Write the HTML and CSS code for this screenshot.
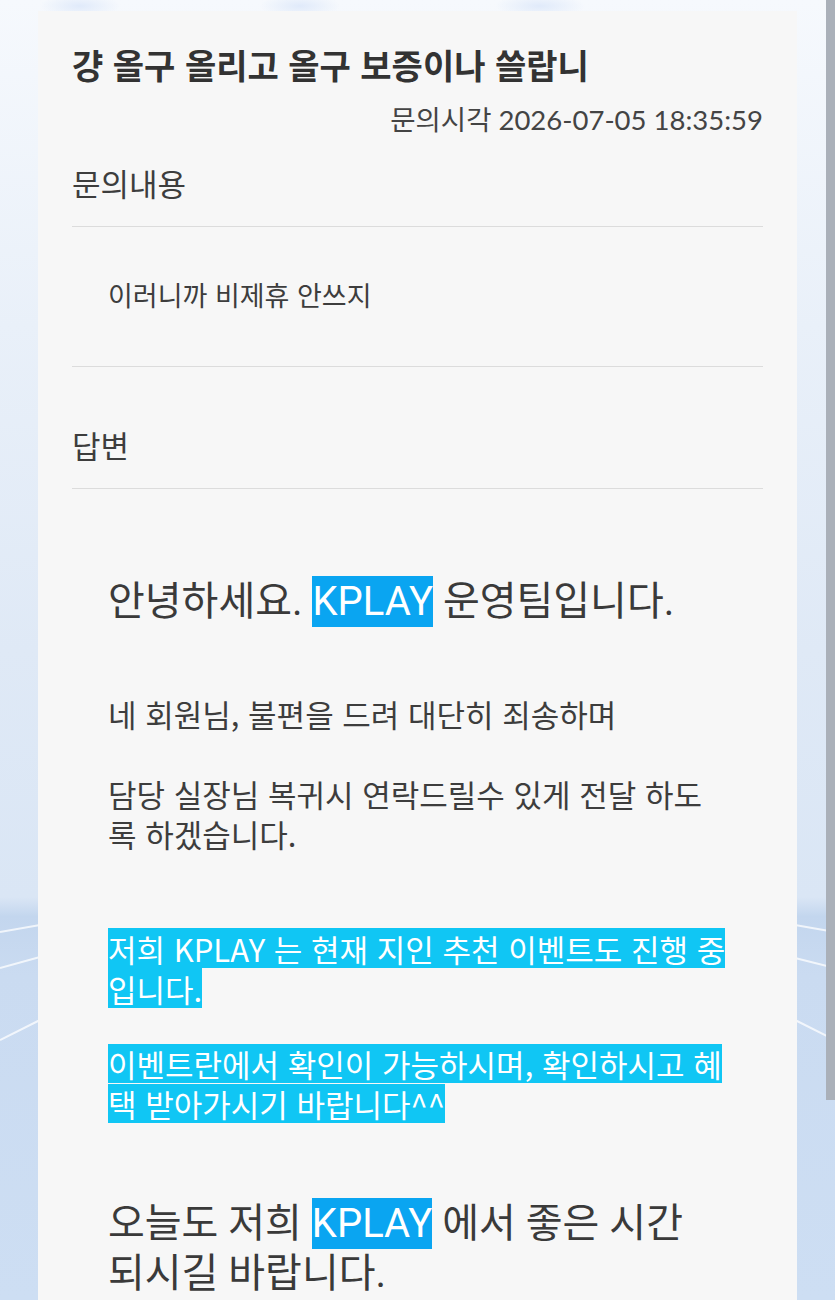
FILE: index.html
```html
<!DOCTYPE html>
<html lang="ko">
<head>
<meta charset="utf-8">
<title>문의내용</title>
<link rel="stylesheet" href="styles.css">
</head>
<body>
<svg class="backdrop" width="835" height="1300" viewBox="0 0 835 1300" aria-hidden="true">
  <defs>
    <linearGradient id="bg" x1="0" y1="0" x2="0" y2="1">
      <stop offset="0" stop-color="#f6f9fd"/>
      <stop offset="0.25" stop-color="#e9f0f9"/>
      <stop offset="0.5" stop-color="#dfe9f6"/>
      <stop offset="0.69" stop-color="#dae6f5"/>
      <stop offset="0.705" stop-color="#c3d6ee"/>
      <stop offset="0.75" stop-color="#cadbf1"/>
      <stop offset="1" stop-color="#cddef3"/>
    </linearGradient>
    <radialGradient id="blob" cx="0.5" cy="0.5" r="0.5">
      <stop offset="0" stop-color="#e0eafa"/>
      <stop offset="1" stop-color="#e0eafa" stop-opacity="0"/>
    </radialGradient>
  </defs>
  <rect width="835" height="1300" fill="url(#bg)"/>
  <ellipse cx="80" cy="6" rx="40" ry="12" fill="url(#blob)"/>
  <ellipse cx="300" cy="6" rx="40" ry="12" fill="url(#blob)"/>
  <ellipse cx="540" cy="6" rx="45" ry="12" fill="url(#blob)"/>
  <g stroke="#ffffff" stroke-width="2" stroke-opacity="0.75">
    <line x1="0" y1="932" x2="40" y2="925"/>
    <line x1="0" y1="968" x2="40" y2="957"/>
    <line x1="0" y1="1040" x2="40" y2="1020"/>
    <line x1="795" y1="925" x2="835" y2="932"/>
    <line x1="795" y1="958" x2="835" y2="968"/>
    <line x1="795" y1="1020" x2="835" y2="1040"/>
  </g>
</svg>
<div class="page">
  <div class="card">
    <h1 class="title">걍 올구 올리고 올구 보증이나 쓸랍니</h1>
    <div class="meta">문의시각 2026-07-05 18:35:59</div>

    <div class="label">문의내용</div>
    <hr class="divider">
    <div class="question">이러니까 비제휴 안쓰지</div>
    <hr class="divider">

    <div class="label label-answer">답변</div>
    <hr class="divider">

    <div class="answer">
      <p class="big greet">안녕하세요. <span class="mark">KPLAY</span> 운영팀입니다.</p>
      <p class="body p1">네 회원님, 불편을 드려 대단히 죄송하며</p>
      <p class="body p2">담당 실장님 복귀시 연락드릴수 있게 전달 하도<br>록 하겠습니다.</p>
      <p class="body cyan c1"><span class="hl">저희 KPLAY 는 현재 지인 추천 이벤트도 진행 중<br>입니다.</span></p>
      <p class="body cyan c2"><span class="hl">이벤트란에서 확인이 가능하시며, 확인하시고 혜<br>택 받아가시기 바랍니다^^</span></p>
      <p class="big close">오늘도 저희 <span class="mark">KPLAY</span> 에서 좋은 시간<br>되시길 바랍니다.</p>
    </div>
  </div>
</div>
<div class="scrollbar"></div>
</body>
</html>
```

FILE: styles.css
```css
html, body {
  margin: 0;
  padding: 0;
}

body {
  width: 835px;
  height: 1300px;
  overflow: hidden;
  position: relative;
  font-family: "Noto Sans CJK KR", "Noto Sans", sans-serif;
  color: #3d3d3d;
  background: #dfe9f6;
}

.backdrop {
  position: absolute;
  top: 0;
  left: 0;
  z-index: 0;
}

.page {
  position: relative;
  z-index: 1;
  padding: 11px 38px 0 38px;
}

.card {
  background: #f7f7f7;
  padding: 32px 34px 0 34px;
  min-height: 1289px;
  box-sizing: border-box;
}

.title {
  margin: 0;
  font-size: 34px;
  line-height: 44px;
  font-weight: 700;
  color: #333333;
}

.meta {
  margin-top: 13px;
  text-align: right;
  font-family: "Lato", "Noto Sans CJK KR", sans-serif;
  font-size: 27.5px;
  line-height: 40px;
  color: #444444;
}

.label {
  margin-top: 23px;
  font-size: 31px;
  line-height: 40px;
  color: #3d3d3d;
}

.label-answer {
  margin-top: 58px;
}

.divider {
  margin: 23px 0 0 0;
  border: 0;
  height: 1px;
  background: #dcdcdc;
}

.question {
  margin: 50px 0 53px 36px;
  font-size: 27px;
  line-height: 36px;
  color: #3d3d3d;
}

.answer {
  padding: 0 0 0 36px;
}

.answer p {
  margin: 0;
}

.big {
  font-family: "Roboto", "Noto Sans CJK KR", sans-serif;
  font-size: 40px;
  line-height: 56px;
  color: #3a3a3a;
}

.greet {
  margin-top: 85px !important;
}

.mark {
  background: #0aa5f1;
  color: #ffffff;
  padding: 2px 0;
}

.body {
  font-size: 31px;
  line-height: 40px;
  color: #3d3d3d;
}

.p1 {
  margin-top: 64px !important;
}

.p2 {
  margin-top: 40px !important;
}

.c1 {
  margin-top: 75px !important;
}

.c2 {
  margin-top: 35px !important;
}

.hl {
  color: #ffffff;
  -webkit-box-decoration-break: clone;
  box-decoration-break: clone;
  background: linear-gradient(to bottom,
    transparent 0, transparent 2.5px,
    #10c6f4 2.5px, #10c6f4 calc(100% - 2.5px),
    transparent calc(100% - 2.5px));
}

.close {
  margin-top: 75px !important;
  line-height: 50px;
}

.scrollbar {
  position: absolute;
  z-index: 2;
  top: 0;
  right: 0;
  width: 9px;
  height: 1100px;
  background: #aab0b9;
}
```
